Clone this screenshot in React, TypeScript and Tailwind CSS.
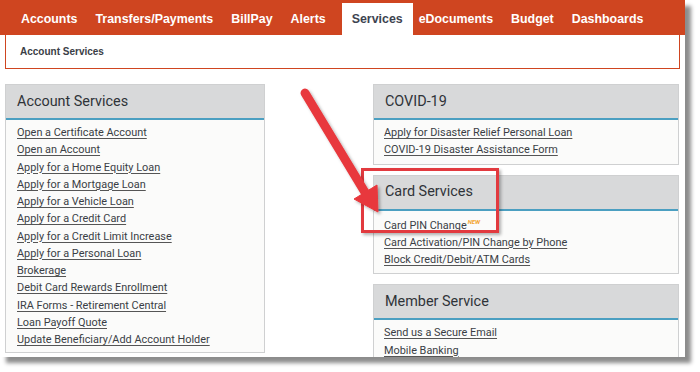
import React from 'react';

const NAV = [
  { label: 'Accounts', cls: 'px-[9px]' },
  { label: 'Transfers/Payments', cls: 'px-[9px]' },
  { label: 'BillPay', cls: 'px-[9px]' },
  { label: 'Alerts', cls: 'px-[9px]' },
];

const NAV_RIGHT = [
  { label: 'eDocuments', cls: 'pl-[6px] pr-[9px]' },
  { label: 'Budget', cls: 'px-[9px]' },
  { label: 'Dashboards', cls: 'px-[9px]' },
];

const ACCOUNT_LINKS = [
  'Open a Certificate Account',
  'Open an Account',
  'Apply for a Home Equity Loan',
  'Apply for a Mortgage Loan',
  'Apply for a Vehicle Loan',
  'Apply for a Credit Card',
  'Apply for a Credit Limit Increase',
  'Apply for a Personal Loan',
  'Brokerage',
  'Debit Card Rewards Enrollment',
  'IRA Forms - Retirement Central',
  'Loan Payoff Quote',
  'Update Beneficiary/Add Account Holder',
];

const Panel = (props: {
  title: string;
  children: React.ReactNode;
  className?: string;
  bodyClass?: string;
}) => {
  const { title, children, className, bodyClass } = props;
  return (
    <div className={`flex flex-col border border-[#cfd0d1] bg-[#fbfbfa] ${className ?? ''}`}>
      <div className="flex h-[35px] shrink-0 items-center border-b-2 border-[#4b9fc1] bg-[#d8d9da] pl-[11px] font-['Roboto',sans-serif] text-[14.4px] text-[#2f3338]">
        {title}
      </div>
      <ul className={`font-['Roboto',sans-serif] text-[10.9px] text-[#3a3e45] ${bodyClass ?? 'pl-[10px] pt-[4px] pb-[5px]'}`}>
        {children}
      </ul>
    </div>
  );
};

const Link = (props: { children: React.ReactNode }) => (
  <li className="h-[17.25px] leading-[17.25px]">
    <a className="underline decoration-[#555] underline-offset-[1.5px]">{props.children}</a>
  </li>
);

export default function App() {
  return (
    <div className="h-[372px] w-[700px] bg-white">
      <div className="relative h-[357px] w-[685px] overflow-hidden bg-white shadow-[6px_6px_4px_rgba(0,0,0,0.45)]">
        {/* top nav */}
        <div className="flex h-[35px] items-end bg-[#cf4520] pl-[12px] font-['Liberation_Sans',Arial,sans-serif] text-[12.4px] font-bold text-white">
          {NAV.map((n) => (
            <div key={n.label} className={`flex h-[32px] items-center ${n.cls}`}>
              {n.label}
            </div>
          ))}
          <div className="ml-[7px] flex h-[32px] items-center bg-white px-[10px] text-[#3d4350]">
            Services
          </div>
          {NAV_RIGHT.map((n) => (
            <div key={n.label} className={`flex h-[32px] items-center ${n.cls}`}>
              {n.label}
            </div>
          ))}
        </div>
        <div className="mx-[5px] flex h-[34px] items-center border-x border-b border-[#cf4520] bg-white pl-[14px] font-['Liberation_Sans',Arial,sans-serif] text-[10px] font-bold text-[#3a3e46]">
          Account Services
        </div>

        {/* panels */}
        <div className="flex px-[5px] pt-[15px]">
          <Panel title="Account Services" className="h-[269px] w-[260px]" bodyClass="pl-[11px] pt-[4px] pb-[5px]">
            {ACCOUNT_LINKS.map((l) => (
              <Link key={l}>{l}</Link>
            ))}
          </Panel>
          <div className="ml-[108px] flex w-[306px] flex-col gap-[10px]">
            <Panel title="COVID-19">
              <Link>Apply for Disaster Relief Personal Loan</Link>
              <Link>COVID-19 Disaster Assistance Form</Link>
            </Panel>
            <Panel title="Card Services" bodyClass="pl-[10px] pt-[6px] pb-[5px]">
              <li className="h-[17.25px] leading-[17.25px]">
                <a className="underline decoration-[#555] underline-offset-[1.5px]">Card PIN Change</a>
                <span className="relative -top-[5px] ml-[1px] text-[6px] font-bold italic leading-none text-[#f3a531]">
                  NEW
                </span>
              </li>
              <Link>Card Activation/PIN Change by Phone</Link>
              <Link>Block Credit/Debit/ATM Cards</Link>
            </Panel>
            <Panel title="Member Service">
              <Link>Send us a Secure Email</Link>
              <Link>Mobile Banking</Link>
            </Panel>
          </div>
        </div>

        {/* annotation: highlight box */}
        <div className="absolute left-[361px] top-[168px] h-[65px] w-[138px] border-[3px] border-[#e23a3f] shadow-[2px_2px_3px_rgba(0,0,0,0.3)]" />

        {/* annotation: arrow */}
        <svg
          className="pointer-events-none absolute left-0 top-0"
          width="685"
          height="357"
          viewBox="0 0 685 357"
        >
          <defs>
            <filter id="sh" x="-20%" y="-20%" width="140%" height="140%">
              <feDropShadow dx="2" dy="2" stdDeviation="1.5" floodColor="#000" floodOpacity="0.3" />
            </filter>
          </defs>
          <g filter="url(#sh)" fill="#e8383d" stroke="#e8383d">
            <line x1="305" y1="93" x2="366" y2="194" strokeWidth="9" strokeLinecap="round" />
            <polygon points="378,212 354,199 377,185" strokeWidth="1" strokeLinejoin="round" />
          </g>
        </svg>
      </div>
    </div>
  );
}
